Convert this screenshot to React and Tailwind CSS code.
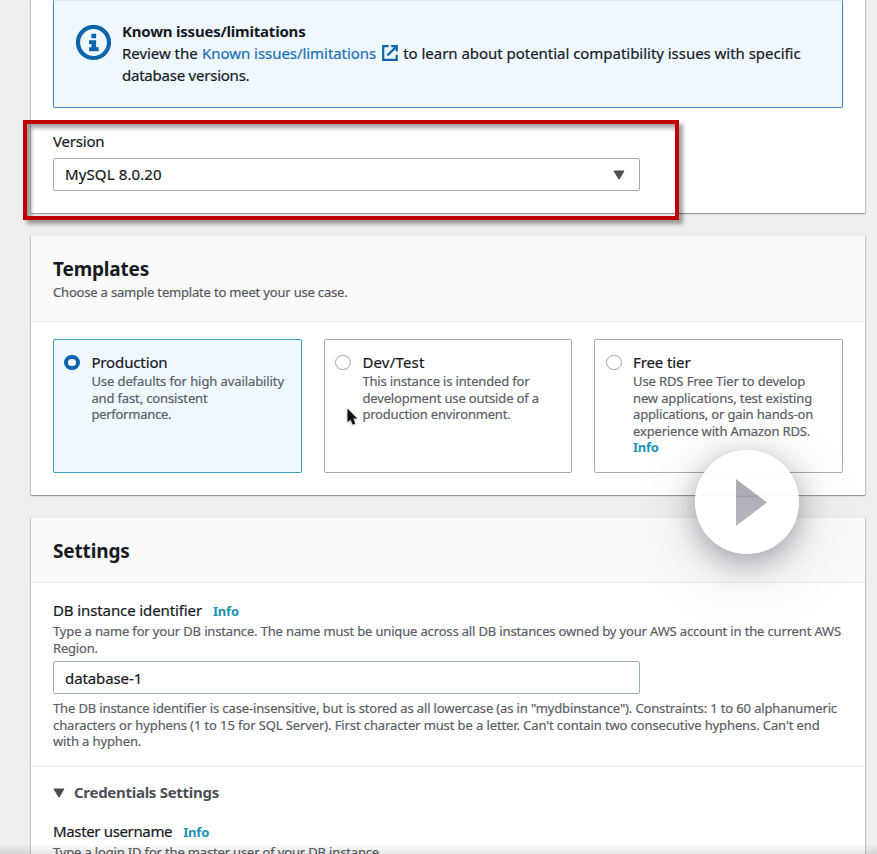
function Line({ className = "", children }) {
  return <span className={`block whitespace-nowrap ${className}`}>{children}</span>;
}

function ExternalIcon() {
  return (
    <svg className="ml-[6px] mr-[5px] mt-[3px] h-4 w-4 shrink-0" viewBox="0 0 16 16" fill="none" stroke="#0d66ab" strokeWidth="2.2">
      <path d="M6.5 1.2H1.2v13.6h13.5V9.8" />
      <path d="M9.2 1.2h5.6v5.4M14.4 1.6L5.4 10.4" />
    </svg>
  );
}

function InfoCircle() {
  return (
    <svg className="ml-[22px] mt-[24px] h-9 w-9 shrink-0" viewBox="0 0 36 36">
      <circle cx="17.5" cy="17.5" r="15.5" fill="none" stroke="#0d66ab" strokeWidth="4.2" />
      <path fill="#0d66ab" d="M15.4 8.8h4.7v4.4h-4.7zM13.1 15.2h7v7.1h2.6v4h-9.6v-4h2.3v-3.2h-2.3z" />
    </svg>
  );
}

function Caret({ className }) {
  return (
    <svg className={className} viewBox="0 0 12 10">
      <path d="M1 1h10L6 9.2z" fill="#4b4d54" stroke="#4b4d54" strokeWidth="1" strokeLinejoin="round" />
    </svg>
  );
}

function Option({ selected, title, titleClass, className, children }) {
  return (
    <div
      className={`flex h-[134px] rounded-[2px] border ${
        selected ? "border-[#3a9dba] bg-[#eff7ff]" : "border-[#a5aeaf] bg-transparent"
      } ${className}`}
    >
      <span
        className={`mt-[14.5px] h-[15.5px] w-[15.5px] shrink-0 rounded-full bg-white ${
          selected ? "border-[4.6px] border-[#0d66ab]" : "border border-[#9ba3a6]"
        }`}
      />
      <div className="ml-[11.5px] mt-[11px]">
        <Line className={`h-[22px] text-[15px] leading-[22px] text-[#16191f] ${titleClass}`}>{title}</Line>
        <div className="text-[13px] leading-[16.5px] text-[#5a6066]">{children}</div>
      </div>
    </div>
  );
}

const panel = "ml-[31px] w-[834px] shrink-0 bg-white shadow-[0_1px_1px_#98989a,-1px_0_0_#c9c9c9,1px_0_1px_#cccccc]";

export default function App() {
  return (
    <div className="relative flex h-[854px] w-[877px] flex-col overflow-hidden bg-[#eeeeee] font-['Noto_Sans','Open_Sans',sans-serif] text-[#16191f] [-webkit-text-stroke:0.2px]">
      <section className={`${panel} h-[213px] px-[22px]`}>
        <div className="flex h-[108px] w-[790px] rounded-b-[2px] border border-[#3c86c4] border-t-[#dbe9f5] bg-[#eff7ff] text-[15px] leading-[22px]">
          <InfoCircle />
          <div className="ml-[10px] mt-[19px]">
            <Line className="font-bold tracking-[-0.21px] [-webkit-text-stroke:0]">Known issues/limitations</Line>
            <div className="flex whitespace-nowrap">
              <span className="mr-[4.5px] tracking-[-0.04px]">Review the</span>
              <span className="tracking-[-0.05px] text-[#1a6fb4]">Known issues/limitations</span>
              <ExternalIcon />
              <span className="tracking-[-0.03px]">to learn about potential compatibility issues with specific</span>
            </div>
            <Line className="tracking-[-0.23px]">database versions.</Line>
          </div>
        </div>
        <div className="mt-[22px]">
          <Line className="h-[27.5px] text-[15px] leading-[22px] tracking-[-0.2px]">Version</Line>
          <div className="flex h-[33px] w-[587px] items-center justify-between rounded-[2px] border border-[#a5aeaf] bg-white pl-[11px] pr-[14px]">
            <Line className="text-[15px] leading-[22px] tracking-[0.12px]">MySQL 8.0.20</Line>
            <Caret className="mt-[1px] h-[10px] w-[12px]" />
          </div>
        </div>
      </section>

      <section className={`${panel} mt-[23px] h-[259px]`}>
        <header className="h-[86px] border-b border-[#ebebeb] bg-[#fafafa] px-[22px] pt-[20px]">
          <h2 className="whitespace-nowrap text-[19px] font-bold leading-[26px] tracking-[-0.17px] [-webkit-text-stroke:0]">Templates</h2>
          <Line className="mt-[2px] text-[13px] leading-[16.4px] tracking-[-0.185px] text-[#55595e]">
            Choose a sample template to meet your use case.
          </Line>
        </header>
        <div className="flex justify-between px-[22px] pt-[17px]">
          <Option selected title="Production" titleClass="tracking-[-0.13px]" className="w-[249px] pl-[10.4px]">
            <Line className="tracking-[-0.09px]">Use defaults for high availability</Line>
            <Line className="tracking-[-0.14px]">and fast, consistent</Line>
            <Line className="tracking-[-0.26px]">performance.</Line>
          </Option>
          <Option title="Dev/Test" titleClass="tracking-[0.18px]" className="w-[248px] pl-[10.4px]">
            <Line className="tracking-[-0.155px]">This instance is intended for</Line>
            <Line className="tracking-[-0.145px]">development use outside of a</Line>
            <Line className="tracking-[-0.195px]">production environment.</Line>
          </Option>
          <Option title="Free tier" titleClass="tracking-[-0.1px]" className="w-[249px] pl-[11px]">
            <Line className="tracking-[-0.11px]">Use RDS Free Tier to develop</Line>
            <Line className="tracking-[-0.135px]">new applications, test existing</Line>
            <Line className="tracking-[-0.16px]">applications, or gain hands-on</Line>
            <Line className="tracking-[-0.155px]">experience with Amazon RDS.</Line>
            <Line className="font-bold tracking-[-0.25px] text-[#1b93b5] [-webkit-text-stroke:0]">Info</Line>
          </Option>
        </div>
      </section>

      <section className={`${panel} mt-[23px] h-[360px]`}>
        <header className="h-[65px] border-b border-[#ebebeb] bg-[#fafafa] px-[22px] pt-[20px]">
          <h2 className="whitespace-nowrap text-[19px] font-bold leading-[27px] tracking-[-0.15px] [-webkit-text-stroke:0]">Settings</h2>
        </header>
        <div className="h-[184px] border-b border-[#ebebeb] px-[22px] pt-[16px] text-[13px] leading-[16.5px] text-[#5a6066]">
          <div className="flex h-[24px] items-baseline leading-[22px]">
            <Line className="text-[15px] tracking-[-0.11px] text-[#16191f]">DB instance identifier</Line>
            <Line className="ml-[11px] font-bold tracking-[-0.2px] text-[#1b93b5] [-webkit-text-stroke:0]">Info</Line>
          </div>
          <Line className="tracking-[-0.155px]">
            Type a name for your DB instance. The name must be unique across all DB instances owned by your AWS account in the current AWS
          </Line>
          <Line className="tracking-[-0.2px]">Region.</Line>
          <div className="mb-[6px] mt-[5px] flex h-[33px] w-[587px] items-center rounded-[2px] border border-[#9fb0b4] bg-white pl-[11px] pt-[1px]">
            <Line className="text-[15px] leading-[22px] tracking-[-0.1px] text-[#16191f]">database-1</Line>
          </div>
          <Line className="tracking-[-0.138px]">
            The DB instance identifier is case-insensitive, but is stored as all lowercase (as in "mydbinstance"). Constraints: 1 to 60 alphanumeric
          </Line>
          <Line className="tracking-[-0.109px]">
            characters or hyphens (1 to 15 for SQL Server). First character must be a letter. Can't contain two consecutive hyphens. Can't end
          </Line>
          <Line className="tracking-[-0.12px]">with a hyphen.</Line>
        </div>
        <div className="px-[22px] pt-[14px] text-[13px] leading-[16.4px] text-[#5a6066]">
          <div className="flex items-center">
            <Caret className="mt-[1px] h-[10px] w-[12px]" />
            <Line className="ml-[9px] text-[15px] font-bold leading-[22px] tracking-[-0.28px] text-[#4b4f55] [-webkit-text-stroke:0]">
              Credentials Settings
            </Line>
          </div>
          <div className="mt-[17px] flex h-[23.5px] items-baseline leading-[22px]">
            <Line className="text-[15px] tracking-[-0.35px] text-[#16191f]">Master username</Line>
            <Line className="ml-[11px] font-bold tracking-[-0.2px] text-[#1b93b5] [-webkit-text-stroke:0]">Info</Line>
          </div>
          <Line className="tracking-[-0.165px]">Type a login ID for the master user of your DB instance</Line>
        </div>
      </section>

      <div className="absolute bottom-0 left-0 h-[10px] w-full bg-linear-to-b from-transparent to-black/10" />

      <div className="absolute left-[23px] top-[120px] h-[100px] w-[656px] border-4 border-[#c00000] shadow-[4px_4px_4px_rgba(0,0,0,0.36),inset_4px_4px_4px_rgba(0,0,0,0.36)]" />

      <svg className="absolute left-[346px] top-[407px] h-[20px] w-[14px] drop-shadow-[0_1px_1px_rgba(0,0,0,0.35)]" viewBox="0 0 14 20">
        <path d="M1.5 1.5v13.6l3-2.7 2.2 5.2 2.6-1.1-2.2-5h4.1z" fill="#111111" />
      </svg>

      <div className="absolute left-[694.5px] top-[450px] flex h-[104px] w-[104px] items-center justify-center rounded-full bg-white/95 shadow-[0_8px_30px_rgba(50,45,75,0.4),0_16px_80px_rgba(0,0,0,0.12)]">
        <svg className="ml-[9px] h-[47px] w-[31px]" viewBox="0 0 31 47">
          <defs>
            <linearGradient id="play" x1="0" x2="0" y1="0" y2="1">
              <stop offset="0" stopColor="#a9a9b1" />
              <stop offset="1" stopColor="#b8b7c0" />
            </linearGradient>
          </defs>
          <path d="M0 0l31 23.5L0 47z" fill="url(#play)" />
          <path d="M0 17.2h22.7" stroke="#96969e" strokeWidth="1" />
        </svg>
      </div>
    </div>
  );
}
